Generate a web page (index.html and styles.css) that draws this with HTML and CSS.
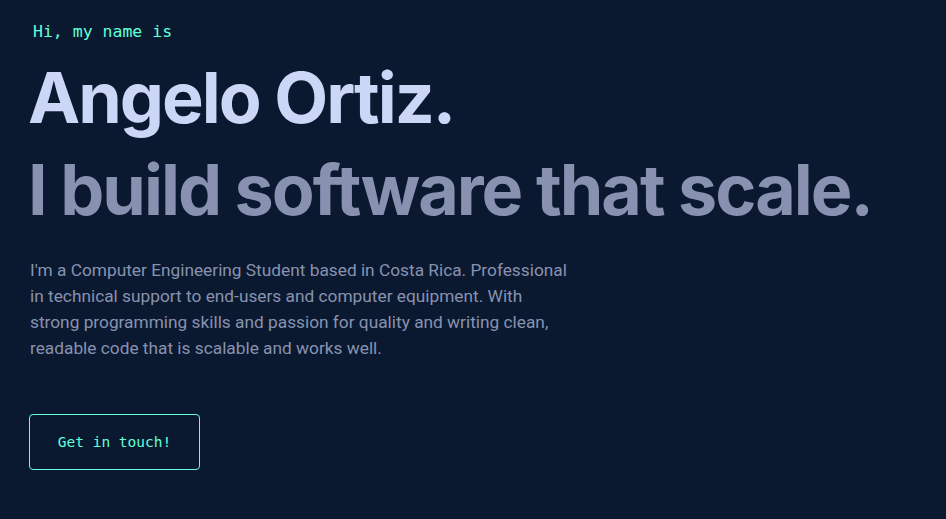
FILE: index.html
```html
<!DOCTYPE html>
<html lang="en">
<head>
<meta charset="utf-8">
<title>Angelo Ortiz</title>
<link rel="stylesheet" href="styles.css">
</head>
<body>
<main class="hero">
  <h1 class="intro">Hi, my name is</h1>
  <h2 class="name">Angelo Ortiz.</h2>
  <h3 class="tagline">I build software that scale.</h3>
  <p class="bio">I'm a Computer Engineering Student based in Costa Rica. Professional in technical support to end-users and computer equipment. With strong programming skills and passion for quality and writing clean, readable code that is scalable and works well.</p>
  <a class="cta" href="#contact">Get in touch!</a>
</main>
</body>
</html>
```

FILE: styles.css
```css
html, body {
  margin: 0;
  padding: 0;
  background: #0a192f;
  height: 100%;
}
.hero {
  display: flex;
  flex-direction: column;
  align-items: flex-start;
  padding: 20px 30px 0 29px;
}
.intro {
  margin: 0 0 0 4px;
  font-family: "DejaVu Sans Mono", "Liberation Mono", monospace;
  font-weight: 400;
  font-size: 16.5px;
  line-height: 24px;
  color: #64ffda;
}
.name, .tagline {
  margin: 0 0 0 -1px;
  font-family: Inter, "Noto Sans", sans-serif;
  font-weight: 700;
  font-size: 70px;
  line-height: 90px;
  letter-spacing: -2px;
}
.name {
  margin-top: 9px;
  color: #ccd6f6;
}
.tagline {
  margin-top: 2px;
  color: #8892b0;
}
.bio {
  margin: 22px 0 0 1px;
  max-width: 545px;
  font-family: Roboto, "Liberation Sans", sans-serif;
  font-size: 17.3px;
  line-height: 26px;
  color: #8892b0;
}
.cta {
  margin-top: 53px;
  box-sizing: border-box;
  width: 171px;
  height: 56px;
  display: flex;
  align-items: center;
  justify-content: center;
  border: 1px solid #64ffda;
  border-radius: 4px;
  font-family: "DejaVu Sans Mono", "Liberation Mono", monospace;
  font-size: 14.5px;
  color: #64ffda;
  text-decoration: none;
}
```
